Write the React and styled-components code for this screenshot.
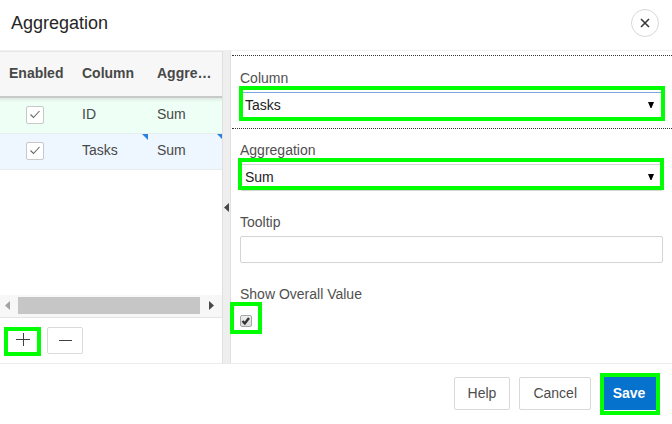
import React from "react";
import styled, { createGlobalStyle, css } from "styled-components";

const GlobalStyle = createGlobalStyle`
  *, *::before, *::after { box-sizing: border-box; }
  body {
    margin: 0;
    background: #fff;
    color: #484848;
    font: 14px/20px "Liberation Sans", Arial, sans-serif;
  }
  button, input, select { font: inherit; margin: 0; }
`;

const Dialog = styled.div`
  display: flex;
  flex-direction: column;
  min-height: 100vh;
`;

const Header = styled.header`
  display: flex;
  align-items: center;
  justify-content: space-between;
  height: 51px;
  padding: 0 13px 4px 11px;
  border-bottom: 1px solid #f0f0f0;
`;

const Title = styled.h1`
  margin: 0;
  font-size: 18px;
  line-height: 24px;
  font-weight: 400;
  color: #262626;
`;

const CloseButton = styled.button`
  display: grid;
  place-items: center;
  width: 28px;
  height: 28px;
  padding: 0;
  border: 1px solid #d8d8d8;
  border-radius: 50%;
  background: #fff;
`;

const Body = styled.main`
  display: flex;
  flex: 1;
`;

const ListPanel = styled.section`
  display: flex;
  flex-direction: column;
  width: 222px;
`;

const GridArea = styled.div`
  flex: 1;
  overflow: hidden;
`;

const Grid = styled.table`
  width: 224px;
  table-layout: fixed;
  border-collapse: separate;
  border-spacing: 0;
`;

const HeadCell = styled.th`
  width: 75px;
  height: 47px;
  padding: 0 8px 2px;
  border-bottom: 2px solid #c9c9c9;
  border-top: 1px solid #e6e6e6;
  background: #f7f7f7;
  text-align: left;
  white-space: nowrap;

  &:first-child {
    width: 74px;
    padding: 0 0 2px 9px;
  }
`;

const Row = styled.tr`
  background: ${(p) => (p.$selected ? "#eef7ff" : "#eefff5")};
`;

const Cell = styled.td`
  position: relative;
  height: 36px;
  padding: 0 8px 3px;
  border-bottom: 1px solid #e8eeee;
  ${(p) =>
    p.$first &&
    css`
      background: linear-gradient(#dcebe1, #eefff5 4px);
    `}
  ${(p) =>
    p.$changed &&
    css`
      &::after {
        content: "";
        position: absolute;
        top: 0;
        right: 1px;
        border-top: 6px solid #2a80e0;
        border-left: 6px solid transparent;
      }
    `}
`;

const CheckCell = styled(Cell)`
  padding: 0 4px 1px 0;
`;

const Tick = styled.span`
  position: relative;
  display: grid;
  width: ${(p) => (p.$small ? 12 : 18)}px;
  height: ${(p) => (p.$small ? 12 : 18)}px;
  margin: ${(p) => (p.$small ? "0" : "0 auto")};

  svg {
    position: absolute;
    inset: 0;
    pointer-events: none;
  }
`;

const TickInput = styled.input`
  appearance: none;
  width: 100%;
  height: 100%;
  border: 1px solid ${(p) => (p.$small ? "#a6a6a6" : "#c8c8c8")};
  border-radius: 2px;
  background: ${(p) => (p.$small ? "linear-gradient(#eee, #dcdcdc)" : "#fff")};
`;

const ScrollBar = styled.div`
  display: flex;
  align-items: center;
  height: 22px;
  padding: 0 4px 1px;
  background: #f7f7f7;
`;

const ScrollArrow = styled.button`
  display: grid;
  place-items: center;
  width: 14px;
  height: 21px;
  padding: 0 8px 0 0;
  border: 0;
  background: none;

  &:last-child {
    padding: 0 0 0 9px;
  }
`;

const ScrollThumb = styled.div`
  height: 17px;
  width: 182px;
  background: #c6c6c6;
`;

const ListActions = styled.div`
  display: flex;
  gap: 6px;
  height: 46px;
  padding: 9px 5px;
  border-top: 1px solid #e4e4e4;
`;

const IconButton = styled.button`
  display: grid;
  place-items: center;
  width: 36px;
  height: 27px;
  padding: 0 0 1px;
  border: 1px solid #dadada;
  border-radius: 2px;
  background: #fff;
`;

const Splitter = styled.button`
  display: grid;
  place-items: center;
  width: 9px;
  padding: 0;
  border: solid #e0e0e0;
  border-width: 0 1px;
  background: #eee;
`;

const FormPanel = styled.form`
  flex: 1;
  min-width: 0;
  margin-top: 4px;
  padding-left: 1px;
`;

const FieldList = styled.div`
  border-top: 1px dotted #333;
`;

const Field = styled.div`
  height: 72px;
  padding: 11px 9px 0 8px;
  border-top: 1px ${(p) => (p.$divided ? "dotted #333" : "solid transparent")};
`;

const Label = styled.label`
  display: block;
  margin-bottom: 4px;
  color: #505050;
`;

/* Green frame laid over a control to point it out in the guide. */
const Highlight = styled.div`
  position: relative;
  ${(p) => p.$fit && "width: fit-content;"}

  &::after {
    content: "";
    position: absolute;
    inset: ${(p) => p.$inset};
    border: 4px solid #00ff00;
    pointer-events: none;
  }
`;

const Select = styled.select`
  appearance: none;
  display: block;
  width: 100%;
  height: 27px;
  padding: 0 20px 2px 4px;
  border: 1px solid ${(p) => (p.$active ? "#7ea6e0" : "#d4d4d4")};
  border-radius: 2px;
  background: #fff;
  color: #222;
`;

const SelectArrow = styled.svg`
  position: absolute;
  top: 10px;
  right: 9px;
  pointer-events: none;
`;

const TextInput = styled.input`
  display: block;
  width: 100%;
  height: 27px;
  padding: 0 4px;
  border: 1px solid #d4d4d4;
  border-radius: 2px;
`;

const CheckLine = styled.div`
  padding-top: 7px;
`;

const Footer = styled.footer`
  display: flex;
  align-items: flex-start;
  justify-content: flex-end;
  height: 61px;
  padding: 13px 16px 0;
  border-top: 1px solid #ebebeb;
`;

const FooterButton = styled.button`
  height: 33px;
  margin-right: 9px;
  padding: 0 13px 2px;
  border: 1px solid #d9d9d9;
  border-radius: 2px;
  background: #fff;
  color: #4d4d4d;
`;

const SaveButton = styled(FooterButton)`
  width: 52px;
  margin: 0 0 0 4px;
  padding: 0 2px 2px 0;
  border: 0;
  border-radius: 0;
  background: #0572ce;
  color: #fff;
  font-weight: 700;
`;

function DropDown({ id, value, inset, active }) {
  return (
    <Highlight $inset={inset}>
      <Select id={id} defaultValue={value} $active={active}>
        <option>{value}</option>
      </Select>
      <SelectArrow width="6" height="6" viewBox="0 0 6 6">
        <path d="M0 0h6L3.5 6h-1z" fill="#000" />
      </SelectArrow>
    </Highlight>
  );
}

const rows = [
  { column: "ID", aggregation: "Sum", selected: false },
  { column: "Tasks", aggregation: "Sum", selected: true },
];

export default function App() {
  return (
    <Dialog role="dialog" aria-labelledby="title">
      <GlobalStyle />
      <Header>
        <Title id="title">Aggregation</Title>
        <CloseButton aria-label="Close">
          <svg width="10" height="10" viewBox="0 0 10 10">
            <path d="M1 1l8 8M9 1L1 9" stroke="#383838" strokeWidth="1.6" />
          </svg>
        </CloseButton>
      </Header>

      <Body>
        <ListPanel>
          <GridArea>
            <Grid>
              <thead>
                <tr>
                  <HeadCell>Enabled</HeadCell>
                  <HeadCell>Column</HeadCell>
                  <HeadCell>Aggre…</HeadCell>
                </tr>
              </thead>
              <tbody>
                {rows.map((row, i) => (
                  <Row key={row.column} $selected={row.selected}>
                    <CheckCell $first={i === 0}>
                      <Tick>
                        <TickInput type="checkbox" defaultChecked aria-label={`Enable ${row.column}`} />
                        <svg width="18" height="18" viewBox="0 0 18 18">
                          <path d="M4.5 8.5l3 3 6-6.5" fill="none" stroke="#666" strokeWidth="1.1" />
                        </svg>
                      </Tick>
                    </CheckCell>
                    <Cell $first={i === 0} $changed={row.selected}>{row.column}</Cell>
                    <Cell $first={i === 0} $changed={row.selected}>{row.aggregation}</Cell>
                  </Row>
                ))}
              </tbody>
            </Grid>
          </GridArea>
          <ScrollBar>
            <ScrollArrow aria-label="Scroll left">
              <svg width="5" height="9" viewBox="0 0 5 9">
                <path d="M5 0v9L0 4.5z" fill="#a3a3a3" />
              </svg>
            </ScrollArrow>
            <ScrollThumb />
            <ScrollArrow aria-label="Scroll right">
              <svg width="5" height="9" viewBox="0 0 5 9">
                <path d="M0 0v9l5-4.5z" fill="#484848" />
              </svg>
            </ScrollArrow>
          </ScrollBar>
          <ListActions>
            <Highlight $inset="0 0 -2px -1px">
              <IconButton aria-label="Add row">
                <svg width="14" height="14" viewBox="0 0 14 14">
                  <path d="M0 6.5h14M7.5 0v13" stroke="#404040" />
                </svg>
              </IconButton>
            </Highlight>
            <IconButton aria-label="Remove row">
              <svg width="13" height="13" viewBox="0 0 13 13">
                <path d="M0 6.5h13" stroke="#404040" />
              </svg>
            </IconButton>
          </ListActions>
        </ListPanel>

        <Splitter aria-label="Collapse panel">
          <svg width="5" height="9" viewBox="0 0 5 9">
            <path d="M5 0v9L0 4.5z" fill="#484848" />
          </svg>
        </Splitter>

        <FormPanel>
          <FieldList>
            <Field>
              <Label htmlFor="column">Column</Label>
              <DropDown id="column" value="Tasks" active inset="-6px -2px -2px -1px" />
            </Field>
            <Field $divided>
              <Label htmlFor="aggregation">Aggregation</Label>
              <DropDown id="aggregation" value="Sum" inset="-6px -1px 1px -2px" />
            </Field>
            <Field>
              <Label htmlFor="tooltip">Tooltip</Label>
              <TextInput id="tooltip" type="text" />
            </Field>
            <Field>
              <Label htmlFor="overall">Show Overall Value</Label>
              <CheckLine>
                <Highlight $fit $inset="-13px -10px -7px -10px">
                  <Tick $small>
                    <TickInput $small id="overall" type="checkbox" defaultChecked />
                    <svg width="12" height="12" viewBox="0 0 12 12">
                      <path d="M2.5 6l2.3 2.5L9 3" fill="none" stroke="#333" strokeWidth="2.4" />
                    </svg>
                  </Tick>
                </Highlight>
              </CheckLine>
            </Field>
          </FieldList>
        </FormPanel>
      </Body>

      <Footer>
        <FooterButton>Help</FooterButton>
        <FooterButton>Cancel</FooterButton>
        <Highlight $inset="-4px -4px -5px 0">
          <SaveButton>Save</SaveButton>
        </Highlight>
      </Footer>
    </Dialog>
  );
}
